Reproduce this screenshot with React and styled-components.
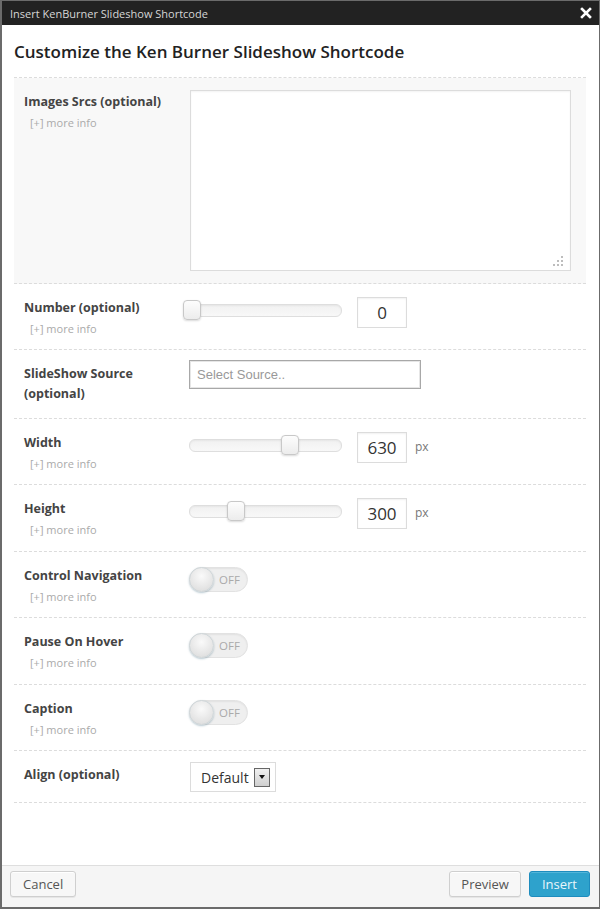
import React from 'react';
import styled, { createGlobalStyle } from 'styled-components';

const GlobalStyle = createGlobalStyle`
  html, body {
    margin: 0;
    padding: 0;
    background: #fff;
    font-family: "Open Sans", "Liberation Sans", Arial, sans-serif;
  }
  * { box-sizing: border-box; }
`;

const Frame = styled.div`
  width: 600px;
  height: 909px;
  display: flex;
  flex-direction: column;
  border-style: solid;
  border-color: #6b6b6b;
  border-width: 1px 1px 2px 2px;
  background: #fff;
`;

const TitleBar = styled.div`
  height: 24px;
  flex: none;
  display: flex;
  align-items: center;
  justify-content: space-between;
  padding: 0 7px 0 8px;
  background: #222;
  color: #d6d6d6;
  font-size: 11px;
`;

const CloseBtn = styled.span`
  display: flex;
  align-items: center;
  width: 12px;
  height: 12px;
`;

const Body = styled.div`
  flex: 1;
  padding: 0 13px 0 12px;
`;

const Heading = styled.h2`
  margin: 0;
  padding: 15px 0 13px;
  font-size: 17px;
  line-height: 24px;
  font-weight: 600;
  color: #222;
  border-bottom: 1px dashed #dcdcdc;
`;

const Row = styled.div`
  display: flex;
  align-items: flex-start;
  padding: 13px 15px 13.5px 10px;
  border-bottom: 1px dashed #dcdcdc;
  background: ${p => (p.$active ? '#f8f8f8' : 'transparent')};
`;

const LabelCol = styled.div`
  width: 165px;
  flex: none;
`;

const Label = styled.div`
  padding-top: 1px;
  font-size: 12.5px;
  line-height: 20px;
  font-weight: 700;
  color: #444;
`;

const MoreInfo = styled.div`
  margin: 4px 0 0 6px;
  font-size: 11px;
  line-height: 14px;
  color: #aaa;
`;

const Controls = styled.div`
  flex: 1;
  display: flex;
  align-items: flex-start;
`;

const AreaWrap = styled.div`
  position: relative;
  margin: -1px 0 -2px 1px;
  width: 381px;
  height: 181px;
`;

const TextArea = styled.textarea`
  display: block;
  width: 100%;
  height: 100%;
  resize: none;
  border: 1px solid #dcdcdc;
  background: #fff;
  box-shadow: inset 0 1px 2px rgba(0, 0, 0, 0.05);
  outline: none;
`;

const Grip = styled.svg`
  position: absolute;
  right: 7px;
  bottom: 4px;
`;

const Track = styled.div`
  position: relative;
  width: 153px;
  height: 13px;
  margin-top: 7px;
  border: 1px solid #dedede;
  border-radius: 6px;
  background: linear-gradient(#f1f1f1, #f8f8f8);
  box-shadow: inset 0 1px 2px rgba(0, 0, 0, 0.05);
`;

const Handle = styled.span`
  position: absolute;
  top: -5px;
  width: 18px;
  height: 20px;
  border: 1px solid #c8c8c8;
  border-radius: 4px;
  background: linear-gradient(#fdfdfd, #ececec);
  box-shadow: 0 1px 2px rgba(0, 0, 0, 0.15);
`;

const NumBox = styled.div`
  width: 50px;
  height: 31px;
  margin-left: 15px;
  display: flex;
  align-items: center;
  justify-content: center;
  border: 1px solid #dcdcdc;
  box-shadow: inset 0 1px 2px rgba(0, 0, 0, 0.06);
  font-size: 17px;
  color: #333;
  background: #fff;
`;

const Unit = styled.span`
  margin: 6px 0 0 8px;
  font-size: 12px;
  color: #777;
`;

const SourceInput = styled.div`
  width: 232px;
  height: 29px;
  margin-top: -3px;
  padding-left: 7px;
  display: flex;
  align-items: center;
  border: 1px solid #a8a8a8;
  box-shadow: inset 0 0 0 1px #e6e6e6;
  font-family: "Liberation Sans", Arial, sans-serif;
  font-size: 13px;
  color: #999;
  background: #fff;
`;

const Switch = styled.div`
  position: relative;
  width: 59px;
  height: 25px;
  margin-top: 2px;
  padding-left: 29px;
  display: flex;
  align-items: center;
  border: 1px solid #e2e2e2;
  border-radius: 13px;
  background: #efefef;
  box-shadow: inset 0 1px 2px rgba(0, 0, 0, 0.06);
  font-size: 11.5px;
  color: #aaa;
`;

const Knob = styled.span`
  position: absolute;
  left: -1px;
  top: -1px;
  width: 25px;
  height: 25px;
  border-radius: 50%;
  border: 1px solid #cfd6d9;
  background: radial-gradient(circle at 50% 35%, #fafafa, #d9d9d9);
  box-shadow: 0 1px 2px rgba(80, 120, 140, 0.4);
`;

const AlignSelect = styled.div`
  width: 86px;
  height: 30px;
  margin: -2px 0 -3.5px 1px;
  padding: 0 5px 0 10px;
  display: flex;
  align-items: center;
  justify-content: space-between;
  border: 1px solid #dcdcdc;
  font-size: 14px;
  color: #333;
  background: #fff;
`;

const ArrowBox = styled.span`
  width: 16px;
  height: 19px;
  display: flex;
  align-items: center;
  justify-content: center;
  border: 1px solid #666;
  background: linear-gradient(#f0f0f0, #cfcfcf);
  &::after {
    content: '';
    border-left: 3px solid transparent;
    border-right: 3px solid transparent;
    border-top: 4px solid #111;
  }
`;

const Footer = styled.div`
  height: 42px;
  flex: none;
  display: flex;
  align-items: flex-start;
  gap: 8px;
  padding: 5px 9px 0 8px;
  border-top: 1px solid #dedede;
  background: #f5f5f5;
`;

const Button = styled.button`
  height: 26px;
  padding: 0 ${p => p.$pad}px;
  border-radius: 3px;
  border: 1px solid ${p => (p.$primary ? '#1e8cbe' : '#cfcfcf')};
  background: ${p => (p.$primary ? '#2ea2cc' : '#f7f7f7')};
  color: ${p => (p.$primary ? '#e8f6fb' : '#555')};
  font-family: "Open Sans", "Liberation Sans", Arial, sans-serif;
  font-size: 13px;
  box-shadow: ${p => (p.$primary ? 'inset 0 1px 0 rgba(120,200,230,.5)' : 'inset 0 1px 0 #fff, 0 1px 0 rgba(0,0,0,.06)')};
  margin-left: ${p => (p.$push ? 'auto' : '0')};
`;

const Info = () => <MoreInfo>[+] more info</MoreInfo>;

const Slider = ({ pct }) => (
  <Track>
    <Handle style={{ left: `calc(${pct}% - 7px)` }} />
  </Track>
);

const Toggle = () => (
  <Switch>
    <Knob />
    OFF
  </Switch>
);

const toggles = ['Control Navigation', 'Pause On Hover', 'Caption'];

export default function App() {
  return (
    <>
      <GlobalStyle />
      <Frame>
        <TitleBar>
          <span>Insert KenBurner Slideshow Shortcode</span>
          <CloseBtn>
            <svg width="12" height="12" viewBox="0 0 12 12">
              <path d="M2 2 L10 10 M10 2 L2 10" stroke="#fff" strokeWidth="2.6" strokeLinecap="square" />
            </svg>
          </CloseBtn>
        </TitleBar>
        <Body>
          <Heading>Customize the Ken Burner Slideshow Shortcode</Heading>

          <Row $active>
            <LabelCol>
              <Label>Images Srcs (optional)</Label>
              <Info />
            </LabelCol>
            <Controls>
              <AreaWrap>
                <TextArea />
                <Grip width="12" height="12" viewBox="0 0 12 12">
                  {[[9, 1], [5, 5], [9, 5], [1, 9], [5, 9], [9, 9]].map(([x, y]) => (
                    <rect key={`${x}-${y}`} x={x} y={y} width="2" height="2" fill="#bdbdbd" />
                  ))}
                </Grip>
              </AreaWrap>
            </Controls>
          </Row>

          <Row>
            <LabelCol>
              <Label>Number (optional)</Label>
              <Info />
            </LabelCol>
            <Controls>
              <Slider pct={0} />
              <NumBox>0</NumBox>
            </Controls>
          </Row>

          <Row>
            <LabelCol>
              <Label>SlideShow Source<br />(optional)</Label>
            </LabelCol>
            <Controls>
              <SourceInput>Select Source..</SourceInput>
            </Controls>
          </Row>

          <Row>
            <LabelCol>
              <Label>Width</Label>
              <Info />
            </LabelCol>
            <Controls>
              <Slider pct={65} />
              <NumBox>630</NumBox>
              <Unit>px</Unit>
            </Controls>
          </Row>

          <Row>
            <LabelCol>
              <Label>Height</Label>
              <Info />
            </LabelCol>
            <Controls>
              <Slider pct={29} />
              <NumBox>300</NumBox>
              <Unit>px</Unit>
            </Controls>
          </Row>

          {toggles.map(t => (
            <Row key={t}>
              <LabelCol>
                <Label>{t}</Label>
                <Info />
              </LabelCol>
              <Controls>
                <Toggle />
              </Controls>
            </Row>
          ))}

          <Row>
            <LabelCol>
              <Label>Align (optional)</Label>
            </LabelCol>
            <Controls>
              <AlignSelect>
                Default
                <ArrowBox />
              </AlignSelect>
            </Controls>
          </Row>
        </Body>
        <Footer>
          <Button $pad={12}>Cancel</Button>
          <Button $pad={11} $push>Preview</Button>
          <Button $pad={12} $primary>Insert</Button>
        </Footer>
      </Frame>
    </>
  );
}
